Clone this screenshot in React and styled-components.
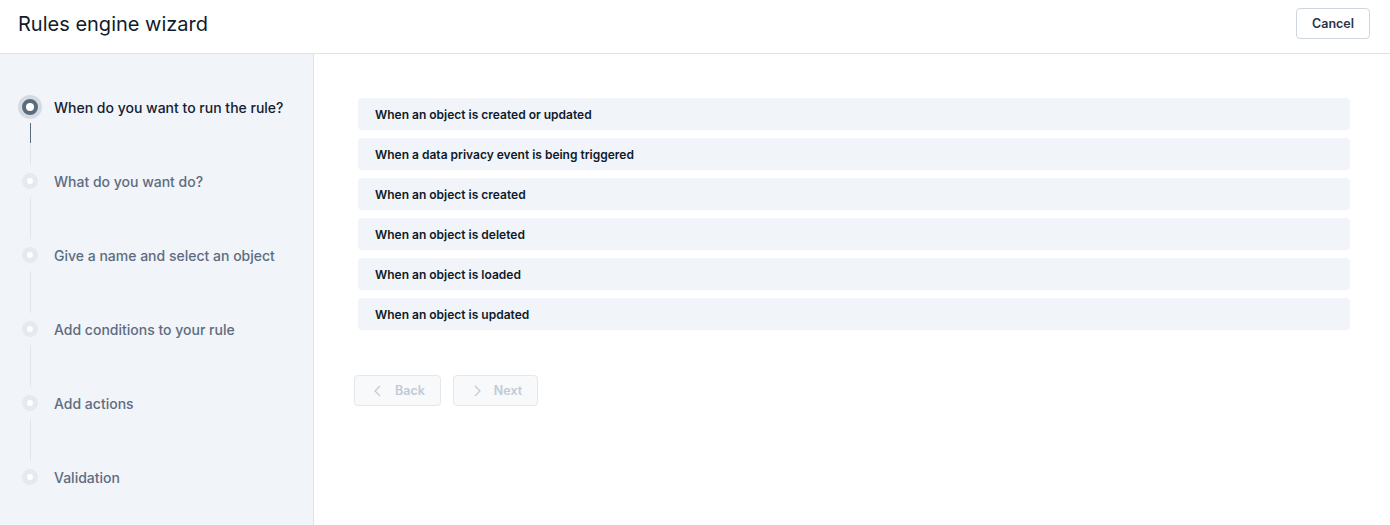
import styled, { createGlobalStyle } from 'styled-components'

const steps = [
  'When do you want to run the rule?',
  'What do you want do?',
  'Give a name and select an object',
  'Add conditions to your rule',
  'Add actions',
  'Validation',
]

const options = [
  'When an object is created or updated',
  'When a data privacy event is being triggered',
  'When an object is created',
  'When an object is deleted',
  'When an object is loaded',
  'When an object is updated',
]

export default function App() {
  return (
    <>
      <GlobalStyle />
      <Page>
        <Header>
          <Title>Rules engine wizard</Title>
          <CancelButton>Cancel</CancelButton>
        </Header>
        <Body>
          <Sidebar>
            {steps.map((label, i) => (
              <Step key={label}>
                <StepRow>
                  <Dot $active={i === 0} />
                  <StepLabel $active={i === 0}>{label}</StepLabel>
                </StepRow>
                {i < steps.length - 1 && <Connector $active={i === 0} />}
              </Step>
            ))}
          </Sidebar>
          <Main>
            <OptionList>
              {options.map((opt) => (
                <Option key={opt}>{opt}</Option>
              ))}
            </OptionList>
            <Actions>
              <NavButton disabled>
                <svg width="14" height="14" viewBox="0 0 14 14" fill="none">
                  <path d="M9 2L4 7l5 5" stroke="currentColor" strokeWidth="1.2" />
                </svg>
                Back
              </NavButton>
              <NavButton disabled>
                <svg width="14" height="14" viewBox="0 0 14 14" fill="none">
                  <path d="M5 2l5 5-5 5" stroke="currentColor" strokeWidth="1.2" />
                </svg>
                Next
              </NavButton>
            </Actions>
          </Main>
        </Body>
      </Page>
    </>
  )
}

const GlobalStyle = createGlobalStyle`
  html, body {
    margin: 0;
    padding: 0;
    background: #fff;
    font-family: Inter, "Noto Sans", sans-serif;
  }
`

const Page = styled.div`
  width: 1390px;
  height: 525px;
  display: flex;
  flex-direction: column;
  overflow: hidden;
`

const Header = styled.header`
  height: 54px;
  flex-shrink: 0;
  display: flex;
  align-items: center;
  justify-content: space-between;
  padding: 0 20px 0 18px;
  border-bottom: 1px solid #dde2e8;
  box-sizing: border-box;
`

const Title = styled.h1`
  margin: 0 0 6px;
  font-size: 20px;
  font-weight: 400;
  color: #111b2b;
`

const CancelButton = styled.button`
  height: 31px;
  width: 74px;
  margin-bottom: 7px;
  background: #fff;
  border: 1px solid #cfd6de;
  border-radius: 4px;
  font-family: inherit;
  font-size: 12.5px;
  font-weight: 600;
  color: #2a3647;
`

const Body = styled.div`
  flex: 1;
  display: flex;
`

const Sidebar = styled.aside`
  width: 314px;
  flex-shrink: 0;
  background: #f1f4f8;
  border-right: 1px solid #dde2e8;
  padding: 41px 0 0 18px;
  box-sizing: border-box;
`

const Step = styled.div`
  display: flex;
  flex-direction: column;
`

const StepRow = styled.div`
  display: flex;
  align-items: center;
  gap: 12px;
  height: 24px;
`

const Dot = styled.span`
  width: 24px;
  height: 24px;
  display: flex;
  align-items: center;
  justify-content: center;
  border-radius: 50%;
  background: ${(p) => (p.$active ? '#d6dbe2' : 'transparent')};

  &::before {
    content: '';
    width: ${(p) => (p.$active ? '8px' : '6px')};
    height: ${(p) => (p.$active ? '8px' : '6px')};
    border-radius: 50%;
    background: #fff;
    border: ${(p) => (p.$active ? '4px solid #5b6b7e' : '5px solid #e6e9ee')};
  }
`

const StepLabel = styled.span`
  font-size: 14px;
  font-weight: 500;
  color: ${(p) => (p.$active ? '#142033' : '#5e6c7f')};
`

const Connector = styled.div`
  width: 1px;
  height: 42px;
  margin: 4px 0 4px 11.5px;
  background: ${(p) =>
    p.$active ? 'linear-gradient(#5b6b7e 0 20px, #e2e6eb 20px)' : '#e2e6eb'};
`

const Main = styled.main`
  flex: 1;
  padding: 44px 40px 0 44px;
`

const OptionList = styled.div`
  display: flex;
  flex-direction: column;
  gap: 8px;
`

const Option = styled.div`
  height: 32px;
  display: flex;
  align-items: center;
  padding-left: 17px;
  background: #f1f4f8;
  border-radius: 4px;
  font-size: 12px;
  font-weight: 600;
  color: #0f1a2a;
`

const Actions = styled.div`
  display: flex;
  gap: 12px;
  margin: 45px 0 0 -4px;
`

const NavButton = styled.button`
  height: 31px;
  padding: 0 15px 0 16px;
  display: flex;
  align-items: center;
  gap: 10px;
  background: #f7f9fb;
  border: 1px solid #e3e8ee;
  border-radius: 4px;
  font-family: inherit;
  font-size: 12.5px;
  font-weight: 600;
  color: #c2cad5;
`
